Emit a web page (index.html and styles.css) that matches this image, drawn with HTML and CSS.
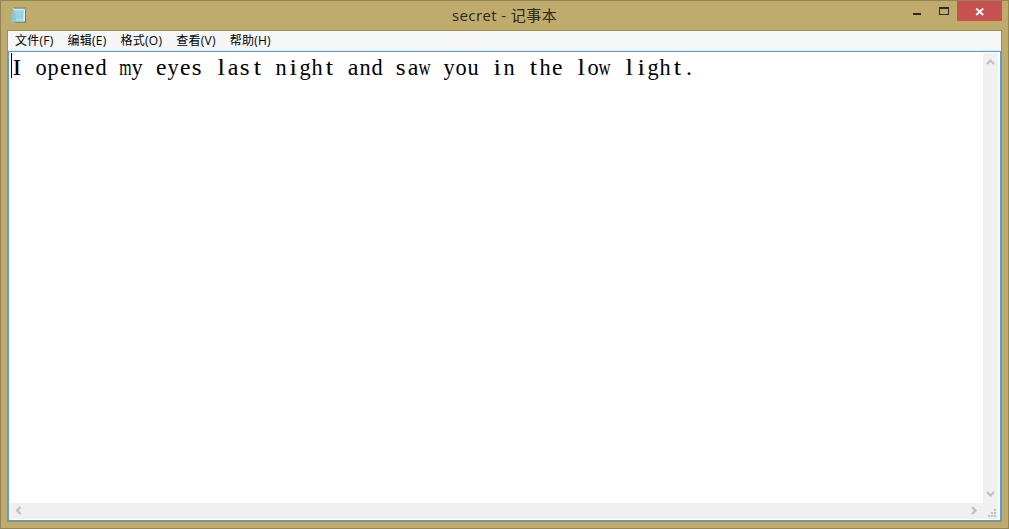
FILE: index.html
```html
<!DOCTYPE html>
<html lang="zh-CN">
<head>
<meta charset="utf-8">
<title>secret - 记事本</title>
<link rel="stylesheet" href="styles.css">
</head>
<body>
<div class="window">
  <header class="titlebar">
    <svg class="app-icon" width="16" height="18" viewBox="0 0 16 18">
      <path d="M2 2h12L12.5 16H.5z" fill="#83cbdc"/>
      <path d="M3.5 3h9.5l-1.200 12H5z" fill="#a9e0ec"/>
      <path d="M4 6h8M4 8h8M4 10h8M4 12h8" stroke="#74bdd2" stroke-width=".7"/>
      <path d="M14 3h.8v13.500H4V16h8.500z" fill="#496c76"/>
      <path d="M13 4h1v11.500h-2z" fill="#e3f1f2"/>
      <path d="M2.500 2.800h12" stroke="#edf3f0" stroke-width="1.500"/>
      <path d="M4 1.500v1.500M6 1.500v1.500M8 1.500v1.500M10 1.500v1.500M12 1.500v1.500M14 1.500v1.500" stroke="#4a5c60" stroke-width="1"/>
    </svg>
    <h1 class="title">secret - 记事本</h1>
    <div class="controls">
      <svg width="41" height="21" viewBox="0 0 41 21" shape-rendering="crispEdges">
        <path d="M0 13h8v2H0z" fill="#282828"/>
        <path d="M26 7h10v8H26zM27 9v5h8V9z" fill="#282828" fill-rule="evenodd"/>
      </svg>
      <span class="close"><svg width="45" height="20" viewBox="0 0 45 20"><path d="M19.200 8.500l7 6.500M26.200 8.500L19.200 15" stroke="#fff" stroke-width="1.800"/></svg></span>
    </div>
  </header>
  <main class="client">
    <nav class="menu"><span>文件(F)</span><span>编辑(E)</span><span>格式(O)</span><span>查看(V)</span><span>帮助(H)</span></nav>
    <section class="editor">
      <div class="page"><p class="text" id="text">I opened my eyes last night and saw you in the low light.</p></div>
      <div class="vscroll">
        <svg width="15" height="16" viewBox="0 0 15 16"><path d="M4 11l3.500-3.500L11 11" class="arrow"/></svg>
        <svg width="15" height="16" viewBox="0 0 15 16"><path d="M4 5l3.500 3.500L11 5" class="arrow"/></svg>
      </div>
      <div class="hscroll">
        <svg width="16" height="16" viewBox="0 0 16 16"><path d="M10.500 4L7 7.500l3.500 3.500" class="arrow"/></svg>
        <svg width="16" height="16" viewBox="0 0 16 16"><path d="M5 4l3.500 3.500L5 11" class="arrow"/></svg>
      </div>
      <div class="grip"><svg width="15" height="16" viewBox="0 0 15 16" shape-rendering="crispEdges"><path d="M11 6h2v2h-2zM8 9h2v2H8zM11 9h2v2h-2zM5 12h2v2H5zM8 12h2v2H8zM11 12h2v2h-2z" fill="#bfbfbf"/></svg></div>
    </section>
  </main>
</div>
<script src="text.js"></script>
</body>
</html>
```

FILE: styles.css
```css
* { box-sizing: border-box; }
body { margin: 0; overflow: hidden; }
.window {
  width: 1009px; height: 529px;
  display: flex; flex-direction: column;
  padding: 0 6px 6px;
  background: #bfab6c;
  border: 1px solid #938453;
  font-family: "Noto Sans", "Noto Sans CJK SC", sans-serif;
}
.titlebar { height: 29px; flex: none; display: grid; grid-template-columns: 1fr auto 1fr; align-items: start; }
.app-icon { margin: 5px 0 0 4px; }
.title { margin: 3px 0 0; font: 15px/22px "Open Sans", "Noto Sans CJK SC", sans-serif; letter-spacing: .4px; color: #2b2820; white-space: nowrap; }
.controls { display: flex; justify-content: flex-end; }
.controls > svg { margin: -1px 3px 0 0; }
.close { width: 45px; height: 20px; background: #c75050; }
.close svg { display: block; margin-top: -1px; }
.client { flex: 1; min-height: 0; display: flex; flex-direction: column; border: 1px solid #a08f59; }
.menu {
  height: 20px; flex: none; display: flex; gap: 14px; padding-left: 7px;
  background: #f5f6f7; border-bottom: 1px solid #e8e8e8;
  font: 12px/19px "Open Sans", "Noto Sans CJK SC", sans-serif; letter-spacing: .25px; color: #000; white-space: nowrap;
}
.editor {
  flex: 1; min-height: 0; display: grid;
  grid-template: 1fr 16px / 1fr 15px;
  border: 1px solid #569de5; padding: 1px 2px 1px 1px; background: #fff;
}
.page { display: flex; align-items: flex-start; padding-left: 1px; }
.text {
  margin: 0; border-left: 1px solid #000; height: 25px;
  display: flex; font: 24px/28px "Liberation Serif", serif; color: #000; white-space: pre;
}
.cell { display: flex; justify-content: center; width: 12px; flex: none; margin-left: -1px; margin-right: 1px; }
.cell b { font-weight: normal; transform: scaleX(var(--stretch)); }
.vscroll { background: #f0f0f0; display: flex; flex-direction: column; justify-content: space-between; }
.hscroll { background: #f0f0f0; display: flex; justify-content: space-between; }
.grip { background: #f0f0f0; }
.arrow { fill: none; stroke: #bfbfbf; stroke-width: 2.2; }
svg { display: block; }
```

FILE: text.js
```js
// Sets the note in fixed 12px columns.
const line = document.getElementById("text");
const stretch = { m: 0.66, w: 0.7, i: 1.12, l: 1.12, t: 1.1, s: 1.05, r: 1.1, a: 1, e: 0.98, I: 1.1, ".": 1 };
const chars = [...line.textContent];
line.textContent = "";
for (const ch of chars) {
  const cell = document.createElement("span");
  cell.className = "cell";
  const glyph = document.createElement("b");
  glyph.textContent = ch;
  glyph.style.setProperty("--stretch", stretch[ch] ?? 0.93);
  cell.append(glyph);
  line.append(cell);
}
```
